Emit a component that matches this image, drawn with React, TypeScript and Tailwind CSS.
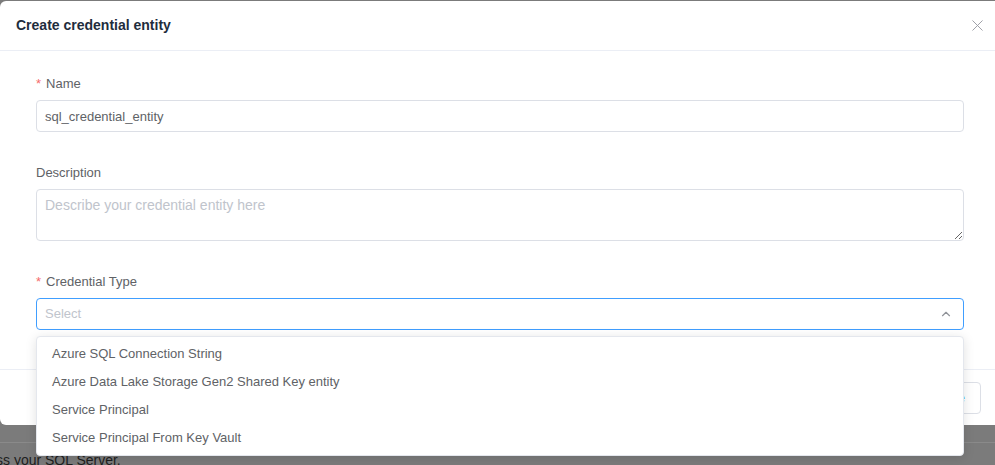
import { ChevronUp, X } from 'lucide-react';

const options = [
    'Azure SQL Connection String',
    'Azure Data Lake Storage Gen2 Shared Key entity',
    'Service Principal',
    'Service Principal From Key Vault',
];

function Label({ text, required }: { text: string; required?: boolean }) {
    return (
        <div className="h-[22px] pt-[2px] mb-[6px] flex items-center text-[13px] text-[#606266] leading-5">
            {required && <span className="text-[#f56c6c] mr-[5px] text-[13px]">*</span>}
            {text}
        </div>
    );
}

export default function App() {
    return (
        <div
            className="w-[995px] h-[465px] bg-[#7b7b7b] overflow-hidden relative"
            style={{ fontFamily: '"Liberation Sans", Arial, sans-serif' }}
        >
            {/* Dialog */}
            <div className="mt-px w-[1010px] h-[424px] bg-white rounded-md flex flex-col relative">
                {/* Header */}
                <div className="h-[50px] px-4 flex items-center justify-between border-b border-[#ebeef5]">
                    <h2 className="text-[14px] font-bold text-[#1f2d3d]">Create credential entity</h2>
                    <X className="w-[19px] h-[19px] text-[#9a9ca3] mr-[7px]" strokeWidth={1.2} />
                </div>

                {/* Body */}
                <div className="pl-9 pr-[46px] pt-[21px] flex-1">
                    <Label text="Name" required />
                    <input
                        className="w-[928px] h-8 border border-[#dcdfe6] rounded px-2 text-[13px] text-[#606266] outline-none"
                        defaultValue="sql_credential_entity"
                    />

                    <div className="mt-[29px]">
                        <Label text="Description" />
                        <textarea
                            className="w-[928px] h-[52px] border border-[#dcdfe6] rounded px-2 py-[5px] text-[14px] text-[#606266] outline-none resize-y placeholder:text-[#c0c4cc] block"
                            placeholder="Describe your credential entity here"
                        />
                    </div>

                    <div className="mt-[29px]">
                        <Label text="Credential Type" required />
                        <div className="w-[928px] h-8 border border-[#409eff] rounded px-2 flex items-center justify-between">
                            <span className="text-[13px] text-[#c0c4cc]">Select</span>
                            <ChevronUp className="w-[14px] h-[14px] text-[#909399] mr-[2px]" strokeWidth={2} />
                        </div>
                    </div>
                </div>

                {/* Footer */}
                <div className="h-[56px] border-t border-[#ebeef5] flex items-center justify-end pr-[29px]">
                    <div className="flex gap-3">
                        <button className="h-8 px-[15px] border border-[#dcdfe6] rounded text-[13px] text-[#606266] bg-white">
                            Cancel
                        </button>
                        <button className="h-8 px-[15px] border border-[#dcdfe6] rounded text-[13px] text-[#409eff] bg-white">
                            Create
                        </button>
                    </div>
                </div>

                {/* Select dropdown */}
                <div className="absolute left-9 top-[335px] w-[928px] h-[120px] bg-white rounded border border-[#e4e7ed] shadow-[0_2px_12px_rgba(0,0,0,0.12)] pt-[3px] z-10">
                    {options.map(o => (
                        <div key={o} className="h-[28px] px-[15px] flex items-center text-[13px] text-[#606266]">
                            {o}
                        </div>
                    ))}
                </div>
            </div>

            {/* Page behind the overlay */}
            <div className="mt-[17px] h-px bg-[#8a8a8a]" />
            <div className="ml-[-4px] mt-[7px] text-[14px] text-[#1e1e1e] leading-5">ss your SQL Server.</div>
        </div>
    );
}
